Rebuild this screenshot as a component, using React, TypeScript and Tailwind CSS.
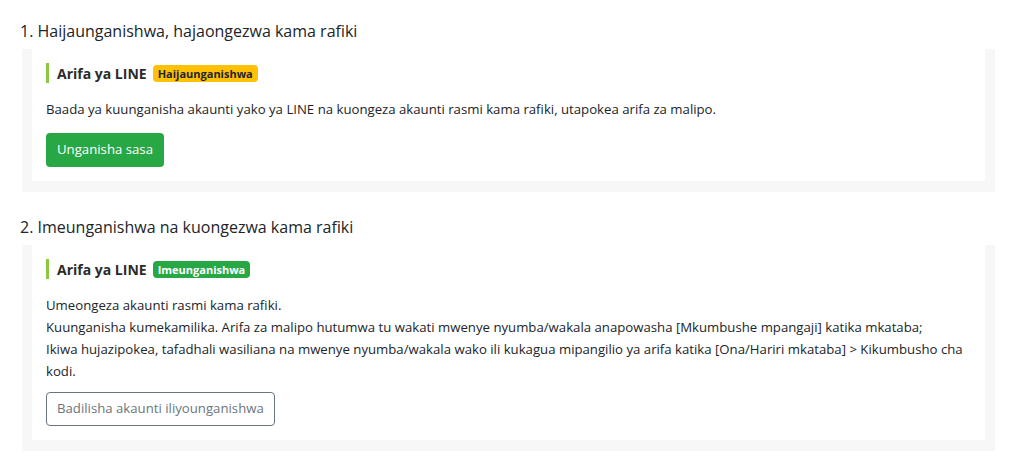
import React from "react";

function Section({
  heading,
  badge,
  badgeClass,
  children,
  button,
  top,
  textTop,
  buttonTop,
}: {
  heading: string;
  badge: string;
  badgeClass: string;
  children: React.ReactNode;
  button: React.ReactNode;
  top: string;
  textTop: string;
  buttonTop: string;
}) {
  return (
    <div>
      <h2 className={`text-[16px] leading-[24px] text-[#212529] pl-[20px] pb-[6px] ${top}`}>{heading}</h2>
      <div className="ml-[22px] mr-[20px] bg-[#f7f7f7] pl-[10px] pr-[10px] pb-[11px]">
        <div className="bg-white pl-[14px] pr-[14px] pt-[14px] pb-[14px]">
          <div className="flex items-center gap-[6px] border-l-[3px] border-[#8dc63f] pl-[8px] h-[20px]">
            <span className="text-[14px] font-bold text-[#2b2b2b]">Arifa ya LINE</span>
            <span className={`text-[11px] font-bold leading-[17px] px-[5px] rounded-[4px] ${badgeClass}`}>{badge}</span>
          </div>
          <div className={`text-[13.2px] leading-[22px] text-[#212529] ${textTop}`}>{children}</div>
          <div className={buttonTop}>{button}</div>
        </div>
      </div>
    </div>
  );
}

export default function App() {
  return (
    <div className="w-[1015px] h-[471px] bg-white" style={{ fontFamily: '"Open Sans", sans-serif' }}>
      <Section
        heading="1. Haijaunganishwa, hajaongezwa kama rafiki"
        badge="Haijaunganishwa"
        badgeClass="bg-[#ffc107] text-[#212529]"
        top="pt-[19px]"
        textTop="mt-[15px]"
        buttonTop="mt-[13px]"
        button={
          <button className="h-[34px] px-[11px] rounded-[4px] bg-[#28a745] text-white text-[13.2px]">Unganisha sasa</button>
        }
      >
        <p>Baada ya kuunganisha akaunti yako ya LINE na kuongeza akaunti rasmi kama rafiki, utapokea arifa za malipo.</p>
      </Section>
      <Section
        heading="2. Imeunganishwa na kuongezwa kama rafiki"
        badge="Imeunganishwa"
        badgeClass="bg-[#28a745] text-white"
        top="pt-[23px]"
        textTop="mt-[15px]"
        buttonTop="mt-[10px]"
        button={
          <button className="h-[34px] px-[10px] rounded-[4px] border border-[#6c757d] text-[#6c757d] text-[13.2px]">
            Badilisha akaunti iliyounganishwa
          </button>
        }
      >
        <p>Umeongeza akaunti rasmi kama rafiki.</p>
        <p>
          Kuunganisha kumekamilika. Arifa za malipo hutumwa tu wakati mwenye nyumba/wakala anapowasha [Mkumbushe mpangaji] katika mkataba;
        </p>
        <p>
          Ikiwa hujazipokea, tafadhali wasiliana na mwenye nyumba/wakala wako ili kukagua mipangilio ya arifa katika [Ona/Hariri mkataba] &gt; Kikumbusho cha kodi.
        </p>
      </Section>
    </div>
  );
}
